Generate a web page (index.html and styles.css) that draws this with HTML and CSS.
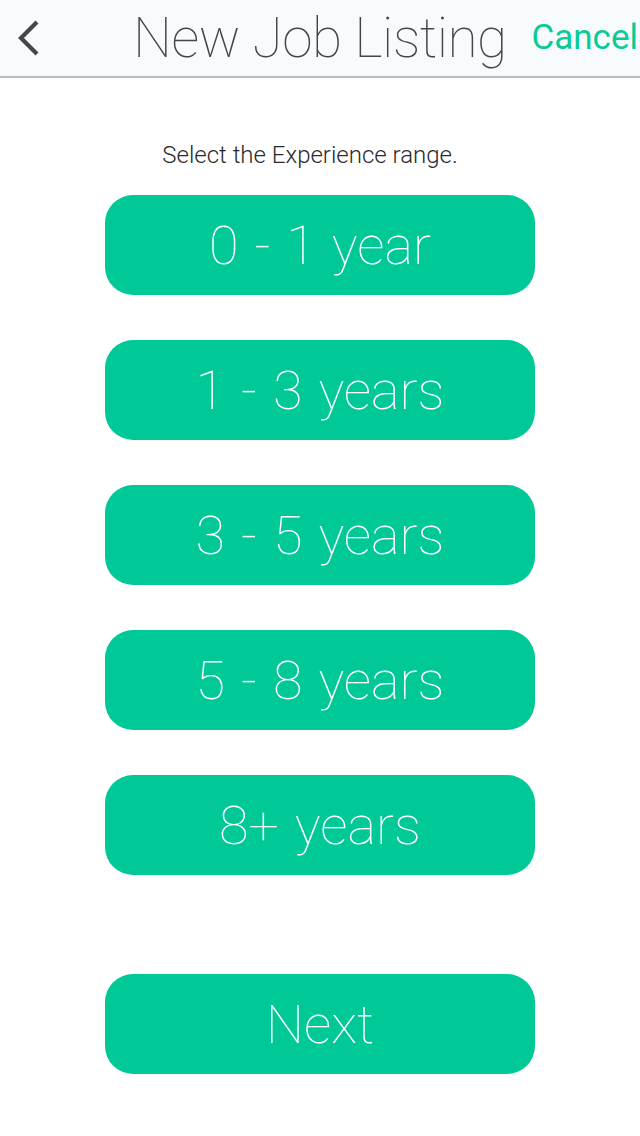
FILE: index.html
```html
<!DOCTYPE html>
<html>
<head>
<meta charset="utf-8">
<link rel="stylesheet" href="styles.css">
</head>
<body>
<header class="navbar">
  <div class="back">
    <svg width="26" height="38" viewBox="0 0 26 38"><path d="M22 3 L6 19 L22 35" fill="none" stroke="#464646" stroke-width="4.2" stroke-linecap="butt" stroke-linejoin="miter"/></svg>
  </div>
  <h1 class="title">New Job Listing</h1>
  <div class="cancel">Cancel</div>
</header>
<main class="content">
  <p class="prompt">Select the Experience range.</p>
  <div class="options">
    <button class="btn">0 - 1 year</button>
    <button class="btn">1 - 3 years</button>
    <button class="btn">3 - 5 years</button>
    <button class="btn">5 - 8 years</button>
    <button class="btn">8+ years</button>
  </div>
  <button class="btn next">Next</button>
</main>
</body>
</html>
```
FILE: styles.css
```css
html, body {
  margin: 0;
  padding: 0;
  background: #ffffff;
  font-family: "Roboto", "Liberation Sans", sans-serif;
}
.navbar {
  height: 76px;
  background: #f8fbfd;
  border-bottom: 2px solid #bcbcbc;
  display: flex;
  align-items: center;
  position: relative;
}
.back {
  width: 26px;
  margin-left: 15px;
  display: flex;
  align-items: center;
  height: 76px;
}
.title {
  margin: 0 0 0 92px;
  font-weight: 100;
  font-size: 55px;
  color: #454545;
  letter-spacing: -0.5px;
  line-height: 76px;
}
.cancel {
  margin-left: auto;
  margin-right: 2px;
  color: #0acb96;
  font-size: 35px;
  font-weight: 400;
  line-height: 76px;
}
.content {
  display: flex;
  flex-direction: column;
  align-items: center;
}
.prompt {
  margin: 62px 0 0 0;
  font-size: 24px;
  color: #2a2a2a;
  font-weight: 300;
  line-height: 30px;
  padding-right: 20px;
}
.options {
  margin-top: 25px;
  display: flex;
  flex-direction: column;
  gap: 45px;
}
.btn {
  width: 430px;
  height: 100px;
  border: none;
  border-radius: 28px;
  background: #00c997;
  color: #ffffff;
  font-family: "Roboto", "Liberation Sans", sans-serif;
  font-weight: 100;
  font-size: 54px;
  word-spacing: 3px;
  padding: 0;
  margin: 0;
  display: block;
}
.next {
  margin-top: 99px;
}
```
